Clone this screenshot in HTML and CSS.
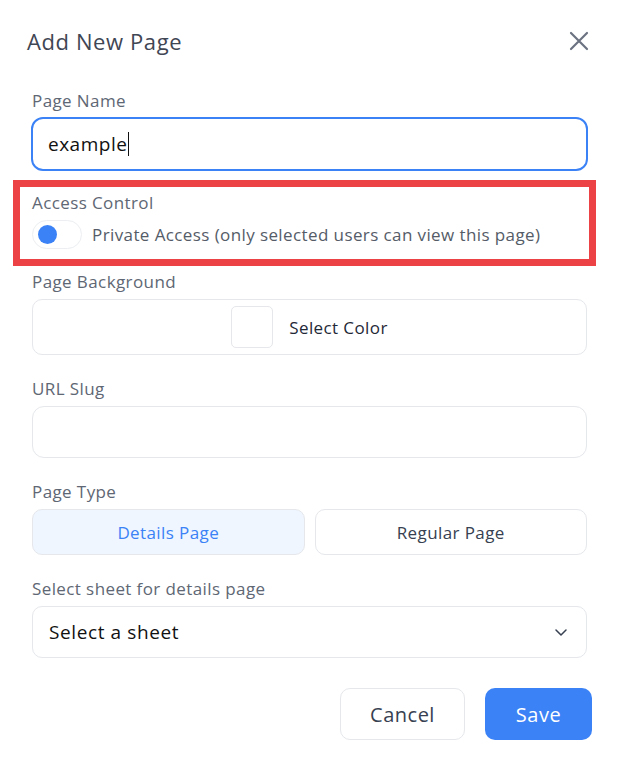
FILE: index.html
```html
<!DOCTYPE html>
<html lang="en">
<head>
<meta charset="utf-8">
<title>Add New Page</title>
<link rel="stylesheet" href="styles.css">
</head>
<body>
<div class="dialog">
  <div class="header">
    <h1 class="title">Add New Page</h1>
    <button class="close" aria-label="Close">
      <svg width="20" height="20" viewBox="0 0 20 20"><path d="M2 2 L18 18 M18 2 L2 18" stroke="#6b7280" stroke-width="2.2" stroke-linecap="round" fill="none"/></svg>
    </button>
  </div>

  <div class="field field-name">
    <div class="label">Page Name</div>
    <div class="input input-focus"><span class="value">example</span><span class="caret"></span></div>
  </div>

  <div class="highlight">
    <div class="label">Access Control</div>
    <div class="toggle-row">
      <span class="toggle"><span class="knob"></span></span>
      <span class="toggle-text">Private Access (only selected users can view this page)</span>
    </div>
  </div>

  <div class="field field-bg">
    <div class="label">Page Background</div>
    <div class="color-box">
      <span class="swatch"></span>
      <span class="color-text">Select Color</span>
    </div>
  </div>

  <div class="field">
    <div class="label">URL Slug</div>
    <div class="input"></div>
  </div>

  <div class="field">
    <div class="label">Page Type</div>
    <div class="type-row">
      <div class="type-btn active">Details Page</div>
      <div class="type-btn">Regular Page</div>
    </div>
  </div>

  <div class="field">
    <div class="label">Select sheet for details page</div>
    <div class="select">
      <span class="select-text">Select a sheet</span>
      <svg width="12" height="7" viewBox="0 0 12 7"><path d="M1 1 L6 6 L11 1" stroke="#374151" stroke-width="1.5" fill="none" stroke-linecap="round" stroke-linejoin="round"/></svg>
    </div>
  </div>

  <div class="footer">
    <button class="btn btn-cancel">Cancel</button>
    <button class="btn btn-save">Save</button>
  </div>
</div>
</body>
</html>
```

FILE: styles.css
```css
* { box-sizing: border-box; }
html, body { margin: 0; padding: 0; background: #ffffff; }
body { font-family: "Open Sans", "Liberation Sans", sans-serif; color: #111827; }

.dialog {
  width: 621px;
  padding: 28px 34px 0 32px;
}

.header {
  display: flex;
  justify-content: space-between;
  align-items: center;
  height: 26px;
  margin-left: -5px;
  margin-bottom: 37px;
}
.title {
  margin: 0;
  font-size: 22px;
  font-weight: 400;
  line-height: 26px;
  letter-spacing: 0.6px;
  color: #3f4654;
}
.close {
  border: 0;
  background: none;
  padding: 0;
  width: 20px;
  height: 20px;
  margin-right: -2px;
  display: flex;
}

.label {
  font-size: 17px;
  line-height: 20px;
  letter-spacing: 0.4px;
  color: #606774;
  margin-bottom: 7px;
}

.field { margin-bottom: 24px; }
.field-name { margin-bottom: 9px; }
.field-name .label { margin-bottom: 6px; }
.field-bg .label { margin-bottom: 7px; }

.input {
  height: 52px;
  border: 1px solid #e5e7eb;
  border-radius: 12px;
  display: flex;
  align-items: center;
  padding: 0 16px;
}
.input-focus {
  height: 54px;
  margin: 0 -1px 0 -1px;
  border: 2px solid #3b82f6;
  padding: 0 15px;
}
.value { font-size: 19px; letter-spacing: 0.5px; color: #111111; }
.caret {
  display: inline-block;
  width: 1px;
  height: 24px;
  background: #111111;
  margin-left: 1px;
}

.highlight {
  border: 7px solid #ec4245;
  margin: 0 -9px 6px -19px;
  padding: 6px 12px 10px 12px;
}
.toggle-row {
  display: flex;
  align-items: center;
  gap: 10px;
}
.toggle {
  width: 50px;
  height: 29px;
  border: 1px solid #eceef1;
  border-radius: 15px;
  display: flex;
  align-items: center;
  padding-left: 5px;
  background: #ffffff;
}
.knob {
  width: 19px;
  height: 19px;
  border-radius: 50%;
  background: #3b82f6;
}
.toggle-text { font-size: 17px; letter-spacing: 0.4px; color: #555c68; }

.color-box {
  height: 56px;
  border: 1px solid #e5e7eb;
  border-radius: 10px;
  display: flex;
  align-items: center;
  justify-content: center;
  gap: 16px;
}
.swatch {
  width: 42px;
  height: 42px;
  border: 1px solid #e5e7eb;
  border-radius: 5px;
  background: #ffffff;
}
.color-text { font-size: 17px; letter-spacing: 0.4px; color: #1f2937; }

.type-row {
  display: flex;
  gap: 10px;
}
.type-btn {
  flex: 1;
  height: 46px;
  border: 1px solid #e5e7eb;
  border-radius: 10px;
  display: flex;
  align-items: center;
  justify-content: center;
  font-size: 17px;
  letter-spacing: 0.4px;
  color: #374151;
}
.type-btn.active {
  background: #eff6ff;
  color: #3b82f6;
}

.select {
  height: 52px;
  border: 1px solid #e5e7eb;
  border-radius: 10px;
  display: flex;
  align-items: center;
  justify-content: space-between;
  padding: 0 19px 0 16px;
}
.select-text { font-size: 19px; letter-spacing: 0.6px; color: #111111; }

.footer {
  display: flex;
  justify-content: flex-end;
  gap: 20px;
  margin-top: 30px;
  margin-right: -5px;
}
.btn {
  height: 52px;
  border-radius: 10px;
  font-family: inherit;
  font-size: 20px;
  letter-spacing: 0.5px;
  cursor: pointer;
}
.btn-cancel {
  width: 125px;
  background: #ffffff;
  border: 1px solid #e5e7eb;
  color: #374151;
}
.btn-save {
  width: 107px;
  background: #3b82f6;
  border: 0;
  color: #ffffff;
}
```
